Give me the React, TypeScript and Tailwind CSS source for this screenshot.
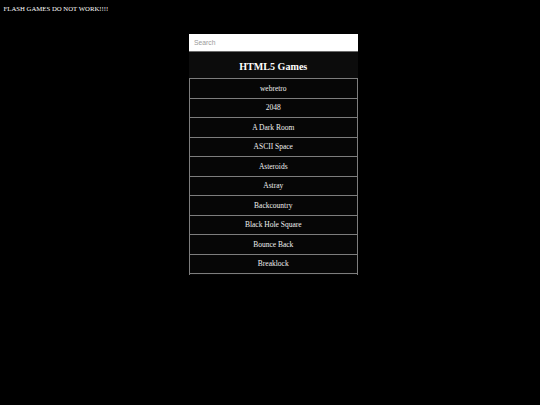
import React from "react";

const games = [
  "webretro",
  "2048",
  "A Dark Room",
  "ASCII Space",
  "Asteroids",
  "Astray",
  "Backcountry",
  "Black Hole Square",
  "Bounce Back",
  "Breaklock",
];

export default function App() {
  return (
    <div
      className="min-h-[405px] w-full bg-black text-[#eeeeee] antialiased"
      style={{ fontFamily: '"Liberation Serif", "Times New Roman", serif' }}
    >
      <div className="px-[3.5px] pt-[4.5px] text-[6.75px] leading-[8px] text-white">
        FLASH GAMES DO NOT WORK!!!!
      </div>

      <div className="ml-[189px] mt-[21.5px] w-[168.5px]">
        <input
          type="text"
          placeholder="Search"
          className="block h-[18px] w-full border-b border-[#6b6b6b] bg-white px-[5px] text-[6.75px] text-black outline-none placeholder:text-[#9a9a9a]"
          style={{ fontFamily: '"Liberation Sans", Arial, sans-serif' }}
        />
        <div className="flex h-[26px] items-center justify-center bg-[#0c0c0c] pt-[4px] text-[10.1px] font-bold text-white">
          HTML5 Games
        </div>
        <div className="h-[197px] overflow-hidden border-x border-[#7d7d7d] bg-[#060606]">
          {games.map((g) => (
            <div
              key={g}
              className="flex h-[19.5px] items-center justify-center border-t border-[#7d7d7d] text-[7.5px] text-[#f0f0f0]"
            >
              {g}
            </div>
          ))}
          <div className="h-[19.5px] border-t border-[#7d7d7d]" />
        </div>
      </div>
    </div>
  );
}
